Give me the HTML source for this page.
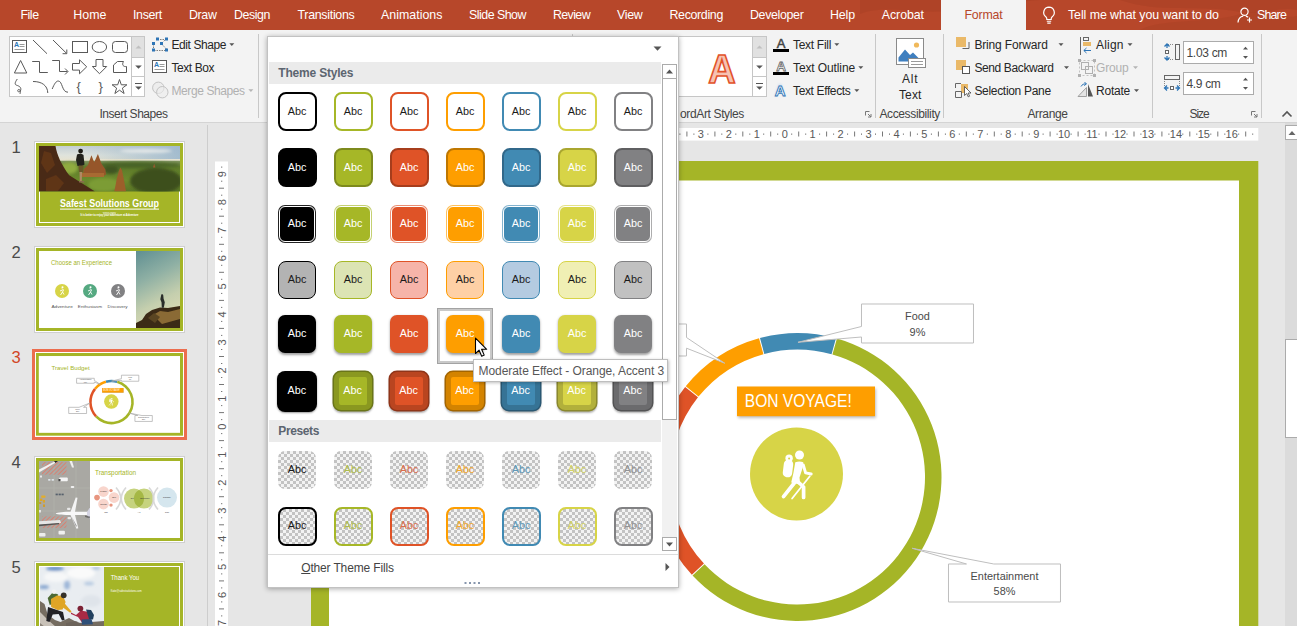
<!DOCTYPE html>
<html lang="en"><head><meta charset="utf-8"><title>PowerPoint</title>
<style>

html,body{margin:0;padding:0;}
body{width:1297px;height:626px;overflow:hidden;background:#e6e6e6;font-family:"Liberation Sans",sans-serif;}
#app{position:relative;width:1297px;height:626px;overflow:hidden;background:#e6e6e6;}
.t{position:absolute;white-space:nowrap;display:block;}
.a{position:absolute;display:block;}
svg{position:absolute;overflow:visible;}
.sep{position:absolute;width:1px;background:#c8c8c8;top:34px;height:84px;}
.it{box-sizing:border-box;display:flex;align-items:center;justify-content:center;font-size:10.8px;}
.it span{display:block;line-height:12px;position:relative;top:-0.800px;}

</style></head>
<body>
<div id="app">
<div class="a" id="tabs" style="left:0;top:0;width:1297px;height:30px;background:#b7472a;"></div>
<svg style="left:860px;top:0" width="437" height="30" viewBox="0 0 437 30"><path d="M0 14 C30 2 70 20 110 6 L180 0 L260 0 C300 14 340 4 380 12 C400 16 420 6 437 10 L437 0 L0 0Z" fill="#a94024" opacity="0.55"/><path d="M280 30 C300 18 350 24 380 14 C400 8 420 20 437 16 L437 30Z" fill="#a94024" opacity="0.45"/></svg>
<div class="a" style="left:941px;top:0;width:85px;height:30px;background:#f3f3f3;"></div>
<span class="t" style="left:20.4px;top:7.0px;height:16px;line-height:16px;font-size:12.4px;color:#ffffff;letter-spacing:-0.445px;">File</span>
<span class="t" style="left:73.3px;top:7.0px;height:16px;line-height:16px;font-size:12.4px;color:#ffffff;letter-spacing:0.031px;">Home</span>
<span class="t" style="left:133.0px;top:7.0px;height:16px;line-height:16px;font-size:12.4px;color:#ffffff;letter-spacing:-0.335px;">Insert</span>
<span class="t" style="left:189.0px;top:7.0px;height:16px;line-height:16px;font-size:12.4px;color:#ffffff;letter-spacing:-0.359px;">Draw</span>
<span class="t" style="left:234.0px;top:7.0px;height:16px;line-height:16px;font-size:12.4px;color:#ffffff;letter-spacing:-0.433px;">Design</span>
<span class="t" style="left:297.5px;top:7.0px;height:16px;line-height:16px;font-size:12.4px;color:#ffffff;letter-spacing:-0.290px;">Transitions</span>
<span class="t" style="left:381.0px;top:7.0px;height:16px;line-height:16px;font-size:12.4px;color:#ffffff;letter-spacing:0.016px;">Animations</span>
<span class="t" style="left:469.0px;top:7.0px;height:16px;line-height:16px;font-size:12.4px;color:#ffffff;letter-spacing:-0.504px;">Slide Show</span>
<span class="t" style="left:553.0px;top:7.0px;height:16px;line-height:16px;font-size:12.4px;color:#ffffff;letter-spacing:-0.610px;">Review</span>
<span class="t" style="left:617.0px;top:7.0px;height:16px;line-height:16px;font-size:12.4px;color:#ffffff;letter-spacing:-0.289px;">View</span>
<span class="t" style="left:669.5px;top:7.0px;height:16px;line-height:16px;font-size:12.4px;color:#ffffff;letter-spacing:-0.336px;">Recording</span>
<span class="t" style="left:750.0px;top:7.0px;height:16px;line-height:16px;font-size:12.4px;color:#ffffff;letter-spacing:-0.336px;">Developer</span>
<span class="t" style="left:830.0px;top:7.0px;height:16px;line-height:16px;font-size:12.4px;color:#ffffff;letter-spacing:-0.126px;">Help</span>
<span class="t" style="left:881.8px;top:7.0px;height:16px;line-height:16px;font-size:12.4px;color:#ffffff;letter-spacing:-0.076px;">Acrobat</span>
<span class="t" style="left:964.5px;top:7.0px;height:16px;line-height:16px;font-size:12.4px;color:#b7472a;letter-spacing:-0.212px;">Format</span>
<span class="t" style="left:1068.0px;top:7.0px;height:16px;line-height:16px;font-size:12.4px;color:#ffffff;letter-spacing:-0.075px;">Tell me what you want to do</span>
<span class="t" style="left:1257.0px;top:7.0px;height:16px;line-height:16px;font-size:12.4px;color:#ffffff;letter-spacing:-0.818px;">Share</span>
<svg style="left:1041px;top:6px" width="16" height="19" viewBox="0 0 16 19"><path d="M8 1.2a5.3 5.3 0 0 0-3.2 9.5c.7.6 1 1.300 1 2.100v.7h4.400v-.7c0-.8.3-1.500 1-2.100A5.300 5.300 0 0 0 8 1.200Z" fill="none" stroke="#fff" stroke-width="1.200"/><path d="M5.800 15.300h4.400M6.300 17.100h3.400" stroke="#fff" stroke-width="1.100"/></svg>
<svg style="left:1237px;top:7px" width="17" height="17" viewBox="0 0 17 17"><circle cx="7.500" cy="4.800" r="3.600" fill="none" stroke="#fff" stroke-width="1.200"/><path d="M1 15.500c.3-3.600 2.600-6 5.200-6.400M8.800 9.100c.8.200 1.600.5 2.300 1.100" fill="none" stroke="#fff" stroke-width="1.200"/><path d="M12.500 10.500v5M10 13h5" stroke="#fff" stroke-width="1.200"/></svg>
<div class="a" style="left:0;top:30px;width:1297px;height:92px;background:#f3f3f3;border-bottom:1px solid #d4d4d4;"></div>
<div class="sep" style="left:258px"></div>
<div class="sep" style="left:572px"></div>
<div class="sep" style="left:875px"></div>
<div class="sep" style="left:943px"></div>
<div class="sep" style="left:1152px"></div>
<div class="sep" style="left:1261px"></div>
<div class="a" style="left:9px;top:36px;width:136px;height:61px;background:#fff;border:1px solid #c6c6c6;box-sizing:border-box;"></div>
<div class="a" style="left:131px;top:36px;width:14px;height:61px;border:1px solid #c6c6c6;box-sizing:border-box;background:#fff"></div>
<div class="a" style="left:132px;top:37px;width:12px;height:20px;background:#e1e1e1;border-bottom:1px solid #c6c6c6;"></div>
<div class="a" style="left:132px;top:76px;width:12px;height:1px;background:#c6c6c6;"></div>
<svg style="left:0;top:0" width="1297" height="130" viewBox="0 0 1297 130" fill="none" stroke="#595959" stroke-width="1"><path d="M135.500 48.500l3-3 3 3z" fill="#c0c0c0" stroke="none"/><path d="M135.200 65.500h6.600l-3.300 3.300z" fill="#555" stroke="none"/><path d="M135 83.500h7" stroke="#555"/><path d="M135.200 86.500h6.600l-3.300 3.300z" fill="#555" stroke="none"/><rect x="12.500" y="40.500" width="14" height="12" fill="#fff"/><path d="M19.500 44.500h5M19.500 46.500h5M14.500 49.500h10" stroke="#9a9a9a"/><text x="14" y="47" font-family="Liberation Sans, sans-serif" font-size="7" font-weight="bold" fill="#2e75b6" stroke="none">A</text><path d="M33 40l14 13.700"/><path d="M53 40l13.500 13.300M66.800 49.500v4.200h-4.200"/><rect x="72.500" y="41.500" width="15" height="11"/><ellipse cx="99.400" cy="47" rx="7.200" ry="5.500"/><rect x="112.500" y="41.500" width="15" height="11" rx="3"/><path d="M20.600 60.500l6.200 12.500h-12.400z"/><path d="M32.200 61.500h7.300v11h8.300"/><path d="M52.200 60.500h7.300v11h8M65 68.500l3 3-3 3"/><path d="M72.500 63.500h7v-3.700l7.200 7-7.200 7v-3.700h-7z"/><path d="M96 59.500h7v7h3.700l-7.200 7.200-7.200-7.200h3.700z"/><path d="M113.500 72.500v-7.500l4-3.500h6c-2 3.500 0 5.500 3 5v6z"/><path d="M17.300 79c-2.500 3.500-2.800 5.500-.8 6.200 2.500.8 5 2 4.200 5-.6 2-3 2.200-3 .4 0-1.500 2.200-1.600 2.600.3.200 1.200-.1 2-.3 3"/><path d="M33 81.500c9 0 14.500 4 14.800 11.500"/><path d="M52.200 89c2-5 4-8 6-8 4.500 0 3.500 11.500 9.800 11.200"/><text x="76.500" y="91" font-family="Liberation Sans, sans-serif" font-size="13" fill="#595959" stroke="none">{</text><text x="98.500" y="91" font-family="Liberation Sans, sans-serif" font-size="13" fill="#595959" stroke="none">}</text><path d="M119.500 79.500l1.800 5.300h5.600l-4.500 3.300 1.700 5.400-4.600-3.300-4.600 3.300 1.700-5.400-4.500-3.300h5.600z"/><path d="M157.500 39.500h9M153.500 44v5M154 50.500h12M162 44.500l4.500 4.500M162 43l4-4" stroke="#7f7f7f" stroke-dasharray="1.500 1"/><rect x="156" y="37.5" width="3" height="3" fill="#2e75b6" stroke="none"/><rect x="165" y="37.5" width="3" height="3" fill="#2e75b6" stroke="none"/><rect x="152" y="42" width="3" height="3" fill="#2e75b6" stroke="none"/><rect x="160" y="42" width="3" height="3" fill="#2e75b6" stroke="none"/><rect x="152" y="48.5" width="3" height="3" fill="#2e75b6" stroke="none"/><rect x="165" y="48.5" width="3" height="3" fill="#2e75b6" stroke="none"/><rect x="152.500" y="60.500" width="14" height="12" fill="#fff"/><path d="M159.500 64.500h5M159.500 66.500h5M154.500 69.500h10" stroke="#9a9a9a"/><text x="154" y="67" font-family="Liberation Sans, sans-serif" font-size="7" font-weight="bold" fill="#2e75b6" stroke="none">A</text><circle cx="158.300" cy="87.800" r="5.700" stroke="#c3c3c3" fill="#ededed"/><circle cx="162.300" cy="92.200" r="5.700" stroke="#c3c3c3" fill="#ededed" fill-opacity=".6"/><path d="M229.3 43.3h5l-2.500 2.700z" fill="#555" stroke="none"/><path d="M248.4 89.3h5l-2.500 2.700z" fill="#b5b5b5" stroke="none"/><rect x="676.500" y="36.500" width="90" height="60" fill="#fff" stroke="#c6c6c6"/><rect x="752.500" y="36.500" width="14" height="60" fill="#fff" stroke="#c6c6c6"/><rect x="753" y="37" width="13" height="20" fill="#e1e1e1" stroke="none"/><path d="M752.500 57.500h14M752.500 76.500h14" stroke="#c6c6c6"/><path d="M756.500 48.500l3-3 3 3z" fill="#c0c0c0" stroke="none"/><path d="M756.200 65.500h6.600l-3.300 3.300z" fill="#555" stroke="none"/><path d="M756 83.500h7" stroke="#555"/><path d="M756.200 86.500h6.600l-3.300 3.300z" fill="#555" stroke="none"/><text x="708.300" y="83" font-family="Liberation Sans, sans-serif" font-size="41" font-weight="bold" fill="#f6c2b2" stroke="#e2522a" stroke-width="1.700" textLength="27.400" lengthAdjust="spacingAndGlyphs">A</text><text x="776.700" y="47.800" font-family="Liberation Sans, sans-serif" font-size="13" fill="#444" stroke="#444" stroke-width=".5">A</text><rect x="773" y="49" width="16" height="3" fill="#000" stroke="none"/><text x="776.300" y="70.800" font-family="Liberation Sans, sans-serif" font-size="13.500" font-weight="bold" fill="#fff" stroke="#666" stroke-width=".8">A</text><rect x="773" y="72" width="16" height="3" fill="#000" stroke="none"/><text x="774.300" y="96" font-family="Liberation Sans, sans-serif" font-size="16" font-weight="bold" fill="#cfe0f3" stroke="none" filter="url(#b1)">A</text><text x="774.800" y="95.600" font-family="Liberation Sans, sans-serif" font-size="15" font-weight="bold" fill="#fff" stroke="#2e75b6" stroke-width=".9">A</text><path d="M834.3 43.3h5l-2.500 2.700z" fill="#555" stroke="none"/><path d="M858.3 66.3h5l-2.500 2.700z" fill="#555" stroke="none"/><path d="M854.3 89.3h5l-2.500 2.700z" fill="#555" stroke="none"/><path d="M865.5 115.5v-4h4" stroke="#777"/><path d="M868.0 114.0l3 3M871.0 114.0v3h-3" stroke="#777"/><path d="M1251.5 115.5v-4h4" stroke="#777"/><path d="M1254.0 114.0l3 3M1257.0 114.0v3h-3" stroke="#777"/><rect x="896.500" y="38.500" width="27" height="26" fill="#fff" stroke="#8a8a8a"/><path d="M898.500 61.500v-4l6.500-8 5 5.500 3-2.500 5.500 5.500v3.500z" fill="#3f7fbf" stroke="none"/><circle cx="916.500" cy="45" r="2.600" fill="#f0b95b" stroke="none"/><rect x="908.500" y="58.500" width="17" height="9" fill="#fff" stroke="#8a8a8a"/><path d="M911 61.500h12M911 64.500h12" stroke="#9a9a9a"/><rect x="956" y="37" width="10" height="10" fill="#eab968" stroke="none"/><path d="M962.500 48.500h6.500v-6.500" stroke="#666"/><rect x="956" y="60" width="10" height="10" fill="#eab968" stroke="none"/><rect x="962.500" y="66.500" width="7" height="7" fill="#fff" stroke="#555"/><rect x="961" y="84" width="7" height="9" fill="#eab968" stroke="none"/><path d="M955.500 88v-4.500h5.500M955.500 91.500h6v6h-6z" stroke="#666"/><path d="M964.500 86.500v9l2.200-2 1.500 3.300 1.400-.6-1.500-3.200h2.900z" fill="#fff" stroke="#444" stroke-width=".8"/><path d="M1058.5 43.3h5l-2.500 2.700z" fill="#555" stroke="none"/><path d="M1064.0 66.3h5l-2.500 2.700z" fill="#555" stroke="none"/><path d="M1080.500 37v18" stroke="#666"/><rect x="1083.500" y="37.500" width="5" height="3" stroke="#666"/><rect x="1083" y="42" width="8" height="4" fill="#eab968" stroke="none"/><path d="M1091 50.500h-7M1086.500 48l-2.700 2.500 2.700 2.500" stroke="#2e75b6"/><path d="M1127.5 43.3h5l-2.500 2.700z" fill="#555" stroke="none"/><rect x="1081.500" y="62.500" width="7" height="7" stroke="#b0b0b0"/><rect x="1085.500" y="66.500" width="7" height="7" stroke="#b0b0b0"/><path d="M1079.500 60.500h15v15h-15z" stroke="#c3c3c3" stroke-dasharray="2 2"/><rect x="1078" y="59" width="3" height="3" fill="#b0b0b0" stroke="none"/><rect x="1093" y="59" width="3" height="3" fill="#b0b0b0" stroke="none"/><rect x="1078" y="74" width="3" height="3" fill="#b0b0b0" stroke="none"/><rect x="1093" y="74" width="3" height="3" fill="#b0b0b0" stroke="none"/><path d="M1133.0 66.3h5l-2.500 2.700z" fill="#b5b5b5" stroke="none"/><path d="M1086.500 96.500h-8.500l8.500-9z" stroke="#a0a0a0" fill="#e4e4e4"/><path d="M1088 96.500v-12.500l5 12.500z" fill="#555" stroke="none"/><path d="M1081 86.500c1-2 3-3 5-2.500M1084.500 82l2 2-2.500 1.500" stroke="#2e75b6"/><path d="M1134.0 89.3h5l-2.500 2.700z" fill="#555" stroke="none"/><rect x="1175.500" y="44.500" width="4" height="15" stroke="#666"/><path d="M1168 44.500h6M1168 59.500h6" stroke="#888" stroke-dasharray="1 1"/><rect x="1165.500" y="50.500" width="3" height="3" stroke="#666" fill="#fff"/><path d="M1167 44v4M1164.500 46.500l2.500-2.500 2.500 2.500M1167 60v-4M1164.500 57.500l2.500 2.500 2.500-2.500" stroke="#2e75b6" stroke-width="1.300"/><rect x="1164.500" y="75.500" width="15" height="4" stroke="#666"/><path d="M1164.500 81v6M1179.500 81v6" stroke="#888" stroke-dasharray="1 1"/><rect x="1170.500" y="86.500" width="3" height="3" stroke="#666" fill="#fff"/><path d="M1164.500 88h4M1167 85.500l-2.500 2.500 2.500 2.500M1179.500 88h-4M1177 85.500l2.500 2.500-2.500 2.500" stroke="#2e75b6" stroke-width="1.300"/><rect x="1183.500" y="41.500" width="70" height="22" fill="#fff" stroke="#ababab"/><rect x="1183.500" y="72.500" width="70" height="22" fill="#fff" stroke="#ababab"/><path d="M1243 49.5l2.500-2.800 2.500 2.800z" fill="#555" stroke="none"/><path d="M1243 56.0h5l-2.500 2.800z" fill="#555" stroke="none"/><path d="M1243 80.5l2.500-2.800 2.500 2.800z" fill="#555" stroke="none"/><path d="M1243 87.0h5l-2.500 2.800z" fill="#555" stroke="none"/><path d="M1282.500 116.500l4.500-4.500 4.500 4.500" stroke="#555" stroke-width="1.600"/></svg>
<span class="t" style="left:171.5px;top:36.8px;height:16px;line-height:16px;font-size:12px;color:#262626;letter-spacing:-0.421px;">Edit Shape</span>
<span class="t" style="left:171.5px;top:59.6px;height:16px;line-height:16px;font-size:12px;color:#262626;letter-spacing:-0.440px;">Text Box</span>
<span class="t" style="left:171.5px;top:82.6px;height:16px;line-height:16px;font-size:12px;color:#b1b1b1;letter-spacing:-0.404px;">Merge Shapes</span>
<span class="t" style="left:99.5px;top:106.0px;height:16px;line-height:16px;font-size:12px;color:#444;letter-spacing:-0.465px;">Insert Shapes</span>
<span class="t" style="left:793.0px;top:36.8px;height:16px;line-height:16px;font-size:12px;color:#262626;letter-spacing:-0.297px;">Text Fill</span>
<span class="t" style="left:793.0px;top:59.6px;height:16px;line-height:16px;font-size:12px;color:#262626;letter-spacing:-0.114px;">Text Outline</span>
<span class="t" style="left:793.0px;top:82.6px;height:16px;line-height:16px;font-size:12px;color:#262626;letter-spacing:-0.367px;">Text Effects</span>
<span class="t" style="left:680.0px;top:106.0px;height:16px;line-height:16px;font-size:12px;color:#444;letter-spacing:-0.361px;">ordArt Styles</span>
<span class="t" style="left:902.0px;top:71.0px;height:16px;line-height:16px;font-size:12px;color:#262626;letter-spacing:0.832px;">Alt</span>
<span class="t" style="left:899.0px;top:86.6px;height:16px;line-height:16px;font-size:12px;color:#262626;letter-spacing:0.123px;">Text</span>
<span class="t" style="left:879.4px;top:106.0px;height:16px;line-height:16px;font-size:12px;color:#444;letter-spacing:-0.365px;">Accessibility</span>
<span class="t" style="left:974.4px;top:36.8px;height:16px;line-height:16px;font-size:12px;color:#262626;letter-spacing:-0.159px;">Bring Forward</span>
<span class="t" style="left:974.4px;top:59.6px;height:16px;line-height:16px;font-size:12px;color:#262626;letter-spacing:-0.381px;">Send Backward</span>
<span class="t" style="left:974.4px;top:82.6px;height:16px;line-height:16px;font-size:12px;color:#262626;letter-spacing:-0.309px;">Selection Pane</span>
<span class="t" style="left:1096.0px;top:36.8px;height:16px;line-height:16px;font-size:12px;color:#262626;letter-spacing:0.203px;">Align</span>
<span class="t" style="left:1096.0px;top:59.6px;height:16px;line-height:16px;font-size:12px;color:#b1b1b1;letter-spacing:-0.170px;">Group</span>
<span class="t" style="left:1096.0px;top:82.6px;height:16px;line-height:16px;font-size:12px;color:#262626;letter-spacing:-0.226px;">Rotate</span>
<span class="t" style="left:1027.5px;top:106.0px;height:16px;line-height:16px;font-size:12px;color:#444;letter-spacing:-0.385px;">Arrange</span>
<span class="t" style="left:1186.5px;top:44.7px;height:16px;line-height:16px;font-size:12px;color:#444;letter-spacing:-0.312px;">1.03 cm</span>
<span class="t" style="left:1186.5px;top:75.7px;height:16px;line-height:16px;font-size:12px;color:#444;letter-spacing:-0.335px;">4.9 cm</span>
<span class="t" style="left:1189.5px;top:106.0px;height:16px;line-height:16px;font-size:12px;color:#444;letter-spacing:-1.036px;">Size</span>
<div class="a" style="left:207px;top:125px;width:1px;height:501px;background:#cdcdcd;"></div>
<svg width="0" height="0" style="left:0;top:0"><defs><filter id="bl" x="-20%" y="-40%" width="140%" height="180%"><feGaussianBlur stdDeviation="1.600"/></filter><filter id="b0"><feGaussianBlur stdDeviation="0.400"/></filter><filter id="b1"><feGaussianBlur stdDeviation="0.800"/></filter><filter id="b2"><feGaussianBlur stdDeviation="1.500"/></filter><filter id="b3"><feGaussianBlur stdDeviation="3"/></filter></defs></svg>
<svg style="left:311px;top:160.5px" width="947.3" height="532.9" viewBox="311 160.500 947.300 532.900" preserveAspectRatio="none" font-family="Liberation Sans, sans-serif"><rect x="311" y="160.500" width="947.300" height="532.900" fill="#a5b527"/><rect x="329" y="180" width="910" height="495" fill="#fff"/><text x="411" y="270" font-size="40" fill="#a5b527" textLength="246" lengthAdjust="spacingAndGlyphs">Travel Budget</text><path d="M759.99 337.47A144.00 144.00 0 0 1 835.98 337.74L831.57 353.64A127.50 127.50 0 0 0 764.29 353.40Z" fill="#418ab3"/><path d="M836.95 338.01A144.00 144.00 0 1 1 692.53 575.07L704.56 563.78A127.50 127.50 0 1 0 832.43 353.88Z" fill="#a5b527"/><path d="M691.84 574.34A144.00 144.00 0 0 1 685.12 386.47L698.00 396.78A127.50 127.50 0 0 0 703.95 563.13Z" fill="#df5327"/><path d="M685.75 385.68A144.00 144.00 0 0 1 759.02 337.74L763.43 353.64A127.50 127.50 0 0 0 698.55 396.09Z" fill="#fe9e00"/><path d="M861.500 303.500h112v39h-112v-6l-63.500 5.300 63.500-15.800z" fill="#fff" stroke="#bfbfbf" stroke-width="1"/><text x="917.5" y="319.7" font-size="11.800" fill="#4a4a4a" text-anchor="middle" textLength="24.8" lengthAdjust="spacingAndGlyphs">Food</text><text x="917.5" y="335.3" font-size="11.800" fill="#4a4a4a" text-anchor="middle" textLength="15.8" lengthAdjust="spacingAndGlyphs">9%</text><path d="M948.500 563.500h18l-54.300-15.700 81.600 15.700h66.700v38h-112z" fill="#fff" stroke="#bfbfbf" stroke-width="1"/><text x="1004.5" y="579.2" font-size="11.800" fill="#4a4a4a" text-anchor="middle" textLength="67.9" lengthAdjust="spacingAndGlyphs">Entertainment</text><text x="1004.5" y="594.8" font-size="11.800" fill="#4a4a4a" text-anchor="middle" textLength="21.8" lengthAdjust="spacingAndGlyphs">58%</text><path d="M572.500 323.500h114v13.500l38.200 25.700-38.200-15v7.800h-114z" fill="#fff" stroke="#bfbfbf" stroke-width="1"/><text x="629.5" y="336.2" font-size="11.800" fill="#4a4a4a" text-anchor="middle" textLength="78.2" lengthAdjust="spacingAndGlyphs">Accommodation</text><text x="629.5" y="351.8" font-size="11.800" fill="#4a4a4a" text-anchor="middle" textLength="21.8" lengthAdjust="spacingAndGlyphs">10%</text><path d="M521.500 510.500h67l70.500-28-41.500 28h19.500v40h-115z" fill="#fff" stroke="#bfbfbf" stroke-width="1"/><text x="579.0" y="527.2" font-size="11.800" fill="#4a4a4a" text-anchor="middle" textLength="29.9" lengthAdjust="spacingAndGlyphs">Travel</text><text x="579.0" y="542.8" font-size="11.800" fill="#4a4a4a" text-anchor="middle" textLength="21.8" lengthAdjust="spacingAndGlyphs">23%</text><rect x="738" y="388" width="138" height="29.500" fill="#000" opacity=".25" filter="url(#bl)"/><rect x="737" y="386" width="138" height="29.700" fill="#fe9e00"/><text x="744.800" y="407" font-size="17.500" fill="#fff" textLength="107" lengthAdjust="spacingAndGlyphs">BON VOYAGE!</text><circle cx="796.500" cy="473.500" r="46.500" fill="#d7d447"/><g fill="#fff" stroke="none"><circle cx="799.500" cy="454.500" r="4.500"/><rect x="783.300" y="459.400" width="9.400" height="17.400" rx="4.200" transform="rotate(7 788 468)"/><circle cx="789.100" cy="457.800" r="3.700"/><circle cx="789.100" cy="458" r="1" fill="#d7d447"/><path d="M795.300 461.800q4.200-1.700 8 0l-.6 5.500-3.200 9.700.8 7.300-9.100-2.300 2.200-9.500z"/></g><g stroke="#fff" fill="none" stroke-linecap="round" stroke-linejoin="round"><path d="M803.300 464.500l2.300 7.800 5.600 1.200" stroke-width="2.900"/><path d="M794.300 482.500l-10.800 13.600" stroke-width="3.700"/><path d="M799.300 482.500l4.300 4v10.500" stroke-width="3.700"/><path d="M809.800 475.800l-17.700 22.200" stroke-width="1.800"/></g></svg>
<svg style="left:0;top:0" width="1297" height="626" viewBox="0 0 1297 626"><rect x="311" y="128" width="947.300" height="12.600" fill="#fff"/><text x="337.7" y="138.400" text-anchor="middle" font-family="Liberation Sans, sans-serif" font-size="11" fill="#595959">16</text><rect x="344.1" y="133.500" width="1" height="1.300" fill="#777"/><rect x="351.1" y="131.500" width="1" height="5" fill="#777"/><rect x="358.1" y="133.500" width="1" height="1.300" fill="#777"/><text x="365.6" y="138.400" text-anchor="middle" font-family="Liberation Sans, sans-serif" font-size="11" fill="#595959">15</text><rect x="372.1" y="133.500" width="1" height="1.300" fill="#777"/><rect x="379.1" y="131.500" width="1" height="5" fill="#777"/><rect x="386.1" y="133.500" width="1" height="1.300" fill="#777"/><text x="393.5" y="138.400" text-anchor="middle" font-family="Liberation Sans, sans-serif" font-size="11" fill="#595959">14</text><rect x="400.0" y="133.500" width="1" height="1.300" fill="#777"/><rect x="407.0" y="131.500" width="1" height="5" fill="#777"/><rect x="414.0" y="133.500" width="1" height="1.300" fill="#777"/><text x="421.5" y="138.400" text-anchor="middle" font-family="Liberation Sans, sans-serif" font-size="11" fill="#595959">13</text><rect x="428.0" y="133.500" width="1" height="1.300" fill="#777"/><rect x="435.0" y="131.500" width="1" height="5" fill="#777"/><rect x="441.9" y="133.500" width="1" height="1.300" fill="#777"/><text x="449.4" y="138.400" text-anchor="middle" font-family="Liberation Sans, sans-serif" font-size="11" fill="#595959">12</text><rect x="455.9" y="133.500" width="1" height="1.300" fill="#777"/><rect x="462.9" y="131.500" width="1" height="5" fill="#777"/><rect x="469.9" y="133.500" width="1" height="1.300" fill="#777"/><text x="477.4" y="138.400" text-anchor="middle" font-family="Liberation Sans, sans-serif" font-size="11" fill="#595959">11</text><rect x="483.8" y="133.500" width="1" height="1.300" fill="#777"/><rect x="490.8" y="131.500" width="1" height="5" fill="#777"/><rect x="497.8" y="133.500" width="1" height="1.300" fill="#777"/><text x="505.3" y="138.400" text-anchor="middle" font-family="Liberation Sans, sans-serif" font-size="11" fill="#595959">10</text><rect x="511.8" y="133.500" width="1" height="1.300" fill="#777"/><rect x="518.8" y="131.500" width="1" height="5" fill="#777"/><rect x="525.8" y="133.500" width="1" height="1.300" fill="#777"/><text x="533.2" y="138.400" text-anchor="middle" font-family="Liberation Sans, sans-serif" font-size="11" fill="#595959">9</text><rect x="539.7" y="133.500" width="1" height="1.300" fill="#777"/><rect x="546.7" y="131.500" width="1" height="5" fill="#777"/><rect x="553.7" y="133.500" width="1" height="1.300" fill="#777"/><text x="561.2" y="138.400" text-anchor="middle" font-family="Liberation Sans, sans-serif" font-size="11" fill="#595959">8</text><rect x="567.7" y="133.500" width="1" height="1.300" fill="#777"/><rect x="574.7" y="131.500" width="1" height="5" fill="#777"/><rect x="581.6" y="133.500" width="1" height="1.300" fill="#777"/><text x="589.1" y="138.400" text-anchor="middle" font-family="Liberation Sans, sans-serif" font-size="11" fill="#595959">7</text><rect x="595.6" y="133.500" width="1" height="1.300" fill="#777"/><rect x="602.6" y="131.500" width="1" height="5" fill="#777"/><rect x="609.6" y="133.500" width="1" height="1.300" fill="#777"/><text x="617.1" y="138.400" text-anchor="middle" font-family="Liberation Sans, sans-serif" font-size="11" fill="#595959">6</text><rect x="623.5" y="133.500" width="1" height="1.300" fill="#777"/><rect x="630.5" y="131.500" width="1" height="5" fill="#777"/><rect x="637.5" y="133.500" width="1" height="1.300" fill="#777"/><text x="645.0" y="138.400" text-anchor="middle" font-family="Liberation Sans, sans-serif" font-size="11" fill="#595959">5</text><rect x="651.5" y="133.500" width="1" height="1.300" fill="#777"/><rect x="658.5" y="131.500" width="1" height="5" fill="#777"/><rect x="665.5" y="133.500" width="1" height="1.300" fill="#777"/><text x="672.9" y="138.400" text-anchor="middle" font-family="Liberation Sans, sans-serif" font-size="11" fill="#595959">4</text><rect x="679.4" y="133.500" width="1" height="1.300" fill="#777"/><rect x="686.4" y="131.500" width="1" height="5" fill="#777"/><rect x="693.4" y="133.500" width="1" height="1.300" fill="#777"/><text x="700.9" y="138.400" text-anchor="middle" font-family="Liberation Sans, sans-serif" font-size="11" fill="#595959">3</text><rect x="707.4" y="133.500" width="1" height="1.300" fill="#777"/><rect x="714.4" y="131.500" width="1" height="5" fill="#777"/><rect x="721.3" y="133.500" width="1" height="1.300" fill="#777"/><text x="728.8" y="138.400" text-anchor="middle" font-family="Liberation Sans, sans-serif" font-size="11" fill="#595959">2</text><rect x="735.3" y="133.500" width="1" height="1.300" fill="#777"/><rect x="742.3" y="131.500" width="1" height="5" fill="#777"/><rect x="749.3" y="133.500" width="1" height="1.300" fill="#777"/><text x="756.8" y="138.400" text-anchor="middle" font-family="Liberation Sans, sans-serif" font-size="11" fill="#595959">1</text><rect x="763.2" y="133.500" width="1" height="1.300" fill="#777"/><rect x="770.2" y="131.500" width="1" height="5" fill="#777"/><rect x="777.2" y="133.500" width="1" height="1.300" fill="#777"/><text x="784.7" y="138.400" text-anchor="middle" font-family="Liberation Sans, sans-serif" font-size="11" fill="#595959">0</text><rect x="791.2" y="133.500" width="1" height="1.300" fill="#777"/><rect x="798.2" y="131.500" width="1" height="5" fill="#777"/><rect x="805.2" y="133.500" width="1" height="1.300" fill="#777"/><text x="812.6" y="138.400" text-anchor="middle" font-family="Liberation Sans, sans-serif" font-size="11" fill="#595959">1</text><rect x="819.1" y="133.500" width="1" height="1.300" fill="#777"/><rect x="826.1" y="131.500" width="1" height="5" fill="#777"/><rect x="833.1" y="133.500" width="1" height="1.300" fill="#777"/><text x="840.6" y="138.400" text-anchor="middle" font-family="Liberation Sans, sans-serif" font-size="11" fill="#595959">2</text><rect x="847.1" y="133.500" width="1" height="1.300" fill="#777"/><rect x="854.1" y="131.500" width="1" height="5" fill="#777"/><rect x="861.0" y="133.500" width="1" height="1.300" fill="#777"/><text x="868.5" y="138.400" text-anchor="middle" font-family="Liberation Sans, sans-serif" font-size="11" fill="#595959">3</text><rect x="875.0" y="133.500" width="1" height="1.300" fill="#777"/><rect x="882.0" y="131.500" width="1" height="5" fill="#777"/><rect x="889.0" y="133.500" width="1" height="1.300" fill="#777"/><text x="896.5" y="138.400" text-anchor="middle" font-family="Liberation Sans, sans-serif" font-size="11" fill="#595959">4</text><rect x="902.9" y="133.500" width="1" height="1.300" fill="#777"/><rect x="909.9" y="131.500" width="1" height="5" fill="#777"/><rect x="916.9" y="133.500" width="1" height="1.300" fill="#777"/><text x="924.4" y="138.400" text-anchor="middle" font-family="Liberation Sans, sans-serif" font-size="11" fill="#595959">5</text><rect x="930.9" y="133.500" width="1" height="1.300" fill="#777"/><rect x="937.9" y="131.500" width="1" height="5" fill="#777"/><rect x="944.9" y="133.500" width="1" height="1.300" fill="#777"/><text x="952.3" y="138.400" text-anchor="middle" font-family="Liberation Sans, sans-serif" font-size="11" fill="#595959">6</text><rect x="958.8" y="133.500" width="1" height="1.300" fill="#777"/><rect x="965.8" y="131.500" width="1" height="5" fill="#777"/><rect x="972.8" y="133.500" width="1" height="1.300" fill="#777"/><text x="980.3" y="138.400" text-anchor="middle" font-family="Liberation Sans, sans-serif" font-size="11" fill="#595959">7</text><rect x="986.8" y="133.500" width="1" height="1.300" fill="#777"/><rect x="993.8" y="131.500" width="1" height="5" fill="#777"/><rect x="1000.7" y="133.500" width="1" height="1.300" fill="#777"/><text x="1008.2" y="138.400" text-anchor="middle" font-family="Liberation Sans, sans-serif" font-size="11" fill="#595959">8</text><rect x="1014.7" y="133.500" width="1" height="1.300" fill="#777"/><rect x="1021.7" y="131.500" width="1" height="5" fill="#777"/><rect x="1028.7" y="133.500" width="1" height="1.300" fill="#777"/><text x="1036.2" y="138.400" text-anchor="middle" font-family="Liberation Sans, sans-serif" font-size="11" fill="#595959">9</text><rect x="1042.6" y="133.500" width="1" height="1.300" fill="#777"/><rect x="1049.6" y="131.500" width="1" height="5" fill="#777"/><rect x="1056.6" y="133.500" width="1" height="1.300" fill="#777"/><text x="1064.1" y="138.400" text-anchor="middle" font-family="Liberation Sans, sans-serif" font-size="11" fill="#595959">10</text><rect x="1070.6" y="133.500" width="1" height="1.300" fill="#777"/><rect x="1077.6" y="131.500" width="1" height="5" fill="#777"/><rect x="1084.6" y="133.500" width="1" height="1.300" fill="#777"/><text x="1092.0" y="138.400" text-anchor="middle" font-family="Liberation Sans, sans-serif" font-size="11" fill="#595959">11</text><rect x="1098.5" y="133.500" width="1" height="1.300" fill="#777"/><rect x="1105.5" y="131.500" width="1" height="5" fill="#777"/><rect x="1112.5" y="133.500" width="1" height="1.300" fill="#777"/><text x="1120.0" y="138.400" text-anchor="middle" font-family="Liberation Sans, sans-serif" font-size="11" fill="#595959">12</text><rect x="1126.5" y="133.500" width="1" height="1.300" fill="#777"/><rect x="1133.5" y="131.500" width="1" height="5" fill="#777"/><rect x="1140.4" y="133.500" width="1" height="1.300" fill="#777"/><text x="1147.9" y="138.400" text-anchor="middle" font-family="Liberation Sans, sans-serif" font-size="11" fill="#595959">13</text><rect x="1154.4" y="133.500" width="1" height="1.300" fill="#777"/><rect x="1161.4" y="131.500" width="1" height="5" fill="#777"/><rect x="1168.4" y="133.500" width="1" height="1.300" fill="#777"/><text x="1175.9" y="138.400" text-anchor="middle" font-family="Liberation Sans, sans-serif" font-size="11" fill="#595959">14</text><rect x="1182.3" y="133.500" width="1" height="1.300" fill="#777"/><rect x="1189.3" y="131.500" width="1" height="5" fill="#777"/><rect x="1196.3" y="133.500" width="1" height="1.300" fill="#777"/><text x="1203.8" y="138.400" text-anchor="middle" font-family="Liberation Sans, sans-serif" font-size="11" fill="#595959">15</text><rect x="1210.3" y="133.500" width="1" height="1.300" fill="#777"/><rect x="1217.3" y="131.500" width="1" height="5" fill="#777"/><rect x="1224.3" y="133.500" width="1" height="1.300" fill="#777"/><text x="1231.7" y="138.400" text-anchor="middle" font-family="Liberation Sans, sans-serif" font-size="11" fill="#595959">16</text><rect x="1238.2" y="133.500" width="1" height="1.300" fill="#777"/><rect x="1245.2" y="131.500" width="1" height="5" fill="#777"/><rect x="1252.2" y="133.500" width="1" height="1.300" fill="#777"/><rect x="215" y="161.500" width="13" height="470" fill="#fff"/><text transform="translate(225.700 174.2) rotate(-90)" text-anchor="middle" font-family="Liberation Sans, sans-serif" font-size="11" fill="#595959">9</text><rect x="221" y="180.7" width="1.300" height="1" fill="#777"/><rect x="219" y="187.7" width="5" height="1" fill="#777"/><rect x="221" y="194.7" width="1.300" height="1" fill="#777"/><text transform="translate(225.700 202.2) rotate(-90)" text-anchor="middle" font-family="Liberation Sans, sans-serif" font-size="11" fill="#595959">8</text><rect x="221" y="208.7" width="1.300" height="1" fill="#777"/><rect x="219" y="215.7" width="5" height="1" fill="#777"/><rect x="221" y="222.7" width="1.300" height="1" fill="#777"/><text transform="translate(225.700 230.3) rotate(-90)" text-anchor="middle" font-family="Liberation Sans, sans-serif" font-size="11" fill="#595959">7</text><rect x="221" y="236.8" width="1.300" height="1" fill="#777"/><rect x="219" y="243.8" width="5" height="1" fill="#777"/><rect x="221" y="250.8" width="1.300" height="1" fill="#777"/><text transform="translate(225.700 258.3) rotate(-90)" text-anchor="middle" font-family="Liberation Sans, sans-serif" font-size="11" fill="#595959">6</text><rect x="221" y="264.8" width="1.300" height="1" fill="#777"/><rect x="219" y="271.8" width="5" height="1" fill="#777"/><rect x="221" y="278.8" width="1.300" height="1" fill="#777"/><text transform="translate(225.700 286.4) rotate(-90)" text-anchor="middle" font-family="Liberation Sans, sans-serif" font-size="11" fill="#595959">5</text><rect x="221" y="292.9" width="1.300" height="1" fill="#777"/><rect x="219" y="299.9" width="5" height="1" fill="#777"/><rect x="221" y="306.9" width="1.300" height="1" fill="#777"/><text transform="translate(225.700 314.4) rotate(-90)" text-anchor="middle" font-family="Liberation Sans, sans-serif" font-size="11" fill="#595959">4</text><rect x="221" y="320.9" width="1.300" height="1" fill="#777"/><rect x="219" y="327.9" width="5" height="1" fill="#777"/><rect x="221" y="334.9" width="1.300" height="1" fill="#777"/><text transform="translate(225.700 342.5) rotate(-90)" text-anchor="middle" font-family="Liberation Sans, sans-serif" font-size="11" fill="#595959">3</text><rect x="221" y="349.0" width="1.300" height="1" fill="#777"/><rect x="219" y="356.0" width="5" height="1" fill="#777"/><rect x="221" y="363.0" width="1.300" height="1" fill="#777"/><text transform="translate(225.700 370.5) rotate(-90)" text-anchor="middle" font-family="Liberation Sans, sans-serif" font-size="11" fill="#595959">2</text><rect x="221" y="377.0" width="1.300" height="1" fill="#777"/><rect x="219" y="384.0" width="5" height="1" fill="#777"/><rect x="221" y="391.0" width="1.300" height="1" fill="#777"/><text transform="translate(225.700 398.6) rotate(-90)" text-anchor="middle" font-family="Liberation Sans, sans-serif" font-size="11" fill="#595959">1</text><rect x="221" y="405.1" width="1.300" height="1" fill="#777"/><rect x="219" y="412.1" width="5" height="1" fill="#777"/><rect x="221" y="419.1" width="1.300" height="1" fill="#777"/><text transform="translate(225.700 426.6) rotate(-90)" text-anchor="middle" font-family="Liberation Sans, sans-serif" font-size="11" fill="#595959">0</text><rect x="221" y="433.1" width="1.300" height="1" fill="#777"/><rect x="219" y="440.1" width="5" height="1" fill="#777"/><rect x="221" y="447.1" width="1.300" height="1" fill="#777"/><text transform="translate(225.700 454.7) rotate(-90)" text-anchor="middle" font-family="Liberation Sans, sans-serif" font-size="11" fill="#595959">1</text><rect x="221" y="461.2" width="1.300" height="1" fill="#777"/><rect x="219" y="468.2" width="5" height="1" fill="#777"/><rect x="221" y="475.2" width="1.300" height="1" fill="#777"/><text transform="translate(225.700 482.7) rotate(-90)" text-anchor="middle" font-family="Liberation Sans, sans-serif" font-size="11" fill="#595959">2</text><rect x="221" y="489.2" width="1.300" height="1" fill="#777"/><rect x="219" y="496.2" width="5" height="1" fill="#777"/><rect x="221" y="503.2" width="1.300" height="1" fill="#777"/><text transform="translate(225.700 510.8) rotate(-90)" text-anchor="middle" font-family="Liberation Sans, sans-serif" font-size="11" fill="#595959">3</text><rect x="221" y="517.3" width="1.300" height="1" fill="#777"/><rect x="219" y="524.3" width="5" height="1" fill="#777"/><rect x="221" y="531.3" width="1.300" height="1" fill="#777"/><text transform="translate(225.700 538.8) rotate(-90)" text-anchor="middle" font-family="Liberation Sans, sans-serif" font-size="11" fill="#595959">4</text><rect x="221" y="545.3" width="1.300" height="1" fill="#777"/><rect x="219" y="552.3" width="5" height="1" fill="#777"/><rect x="221" y="559.3" width="1.300" height="1" fill="#777"/><text transform="translate(225.700 566.9) rotate(-90)" text-anchor="middle" font-family="Liberation Sans, sans-serif" font-size="11" fill="#595959">5</text><rect x="221" y="573.4" width="1.300" height="1" fill="#777"/><rect x="219" y="580.4" width="5" height="1" fill="#777"/><rect x="221" y="587.4" width="1.300" height="1" fill="#777"/><text transform="translate(225.700 594.9) rotate(-90)" text-anchor="middle" font-family="Liberation Sans, sans-serif" font-size="11" fill="#595959">6</text><rect x="221" y="601.4" width="1.300" height="1" fill="#777"/><rect x="219" y="608.4" width="5" height="1" fill="#777"/><rect x="221" y="615.4" width="1.300" height="1" fill="#777"/><text transform="translate(225.700 623.0) rotate(-90)" text-anchor="middle" font-family="Liberation Sans, sans-serif" font-size="11" fill="#595959">7</text><rect x="221" y="629.5" width="1.300" height="1" fill="#777"/><rect x="219" y="636.5" width="5" height="1" fill="#777"/><rect x="221" y="643.5" width="1.300" height="1" fill="#777"/><text transform="translate(225.700 651.0) rotate(-90)" text-anchor="middle" font-family="Liberation Sans, sans-serif" font-size="11" fill="#595959">8</text><rect x="221" y="657.5" width="1.300" height="1" fill="#777"/><rect x="219" y="664.5" width="5" height="1" fill="#777"/><rect x="221" y="671.5" width="1.300" height="1" fill="#777"/><rect x="221" y="166.6" width="1.300" height="1" fill="#777"/><rect x="1285" y="123" width="12" height="503" fill="#dbdbdb"/><rect x="1285.500" y="125.500" width="14" height="14" fill="#fff" stroke="#ababab"/><path d="M1288.500 135l3.500-4 3.500 4z" fill="#666"/><rect x="1285.500" y="339.500" width="14" height="98" fill="#fff" stroke="#ababab"/></svg>
<span class="t" style="left:11.6px;top:138.0px;height:20px;line-height:20px;font-size:16.6px;color:#4a4a4a;">1</span>
<div class="a" style="left:34px;top:141px;width:151px;height:87px;box-sizing:border-box;border:1px solid #cfcfcf;background:#fff;"></div>
<span class="t" style="left:11.6px;top:243.0px;height:20px;line-height:20px;font-size:16.6px;color:#4a4a4a;">2</span>
<div class="a" style="left:34px;top:246px;width:151px;height:87px;box-sizing:border-box;border:1px solid #cfcfcf;background:#fff;"></div>
<span class="t" style="left:11.6px;top:348.0px;height:20px;line-height:20px;font-size:16.6px;color:#d24726;">3</span>
<div class="a" style="left:32px;top:349px;width:155px;height:91px;box-sizing:border-box;border:3px solid #ec6d4e;background:#fff;"></div>
<span class="t" style="left:11.6px;top:453.0px;height:20px;line-height:20px;font-size:16.6px;color:#4a4a4a;">4</span>
<div class="a" style="left:34px;top:456px;width:151px;height:87px;box-sizing:border-box;border:1px solid #cfcfcf;background:#fff;"></div>
<span class="t" style="left:11.6px;top:558.0px;height:20px;line-height:20px;font-size:16.6px;color:#4a4a4a;">5</span>
<div class="a" style="left:34px;top:561px;width:151px;height:87px;box-sizing:border-box;border:1px solid #cfcfcf;background:#fff;"></div>
<svg style="left:36px;top:353px" width="147" height="82.7" viewBox="311 160.500 947.300 532.900" preserveAspectRatio="none" font-family="Liberation Sans, sans-serif"><rect x="311" y="160.500" width="947.300" height="532.900" fill="#a5b527"/><rect x="329" y="180" width="910" height="495" fill="#fff"/><text x="411" y="270" font-size="40" fill="#a5b527" textLength="246" lengthAdjust="spacingAndGlyphs">Travel Budget</text><path d="M759.99 337.47A144.00 144.00 0 0 1 835.98 337.74L831.57 353.64A127.50 127.50 0 0 0 764.29 353.40Z" fill="#418ab3"/><path d="M836.95 338.01A144.00 144.00 0 1 1 692.53 575.07L704.56 563.78A127.50 127.50 0 1 0 832.43 353.88Z" fill="#a5b527"/><path d="M691.84 574.34A144.00 144.00 0 0 1 685.12 386.47L698.00 396.78A127.50 127.50 0 0 0 703.95 563.13Z" fill="#df5327"/><path d="M685.75 385.68A144.00 144.00 0 0 1 759.02 337.74L763.43 353.64A127.50 127.50 0 0 0 698.55 396.09Z" fill="#fe9e00"/><path d="M861.500 303.500h112v39h-112v-6l-63.500 5.300 63.500-15.800z" fill="#fff" stroke="#a8a8a8" stroke-width="4.500"/><text x="917.5" y="319.7" font-size="11.800" fill="#4a4a4a" text-anchor="middle" textLength="24.8" lengthAdjust="spacingAndGlyphs">Food</text><text x="917.5" y="335.3" font-size="11.800" fill="#4a4a4a" text-anchor="middle" textLength="15.8" lengthAdjust="spacingAndGlyphs">9%</text><path d="M948.500 563.500h18l-54.300-15.700 81.600 15.700h66.700v38h-112z" fill="#fff" stroke="#a8a8a8" stroke-width="4.500"/><text x="1004.5" y="579.2" font-size="11.800" fill="#4a4a4a" text-anchor="middle" textLength="67.9" lengthAdjust="spacingAndGlyphs">Entertainment</text><text x="1004.5" y="594.8" font-size="11.800" fill="#4a4a4a" text-anchor="middle" textLength="21.8" lengthAdjust="spacingAndGlyphs">58%</text><path d="M572.500 323.500h114v13.500l38.200 25.700-38.200-15v7.800h-114z" fill="#fff" stroke="#a8a8a8" stroke-width="4.500"/><text x="629.5" y="336.2" font-size="11.800" fill="#4a4a4a" text-anchor="middle" textLength="78.2" lengthAdjust="spacingAndGlyphs">Accommodation</text><text x="629.5" y="351.8" font-size="11.800" fill="#4a4a4a" text-anchor="middle" textLength="21.8" lengthAdjust="spacingAndGlyphs">10%</text><path d="M521.500 510.500h67l70.500-28-41.500 28h19.500v40h-115z" fill="#fff" stroke="#a8a8a8" stroke-width="4.500"/><text x="579.0" y="527.2" font-size="11.800" fill="#4a4a4a" text-anchor="middle" textLength="29.9" lengthAdjust="spacingAndGlyphs">Travel</text><text x="579.0" y="542.8" font-size="11.800" fill="#4a4a4a" text-anchor="middle" textLength="21.8" lengthAdjust="spacingAndGlyphs">23%</text><rect x="738" y="388" width="138" height="29.500" fill="#000" opacity=".25" filter="url(#bl)"/><rect x="737" y="386" width="138" height="29.700" fill="#fe9e00"/><text x="744.800" y="407" font-size="17.500" fill="#fff" textLength="107" lengthAdjust="spacingAndGlyphs">BON VOYAGE!</text><circle cx="796.500" cy="473.500" r="46.500" fill="#d7d447"/><g fill="#fff" stroke="none"><circle cx="799.500" cy="454.500" r="4.500"/><rect x="783.300" y="459.400" width="9.400" height="17.400" rx="4.200" transform="rotate(7 788 468)"/><circle cx="789.100" cy="457.800" r="3.700"/><circle cx="789.100" cy="458" r="1" fill="#d7d447"/><path d="M795.300 461.800q4.200-1.700 8 0l-.6 5.500-3.200 9.700.8 7.300-9.100-2.300 2.200-9.500z"/></g><g stroke="#fff" fill="none" stroke-linecap="round" stroke-linejoin="round"><path d="M803.300 464.500l2.300 7.800 5.600 1.200" stroke-width="2.900"/><path d="M794.300 482.500l-10.800 13.600" stroke-width="3.700"/><path d="M799.300 482.500l4.300 4v10.500" stroke-width="3.700"/><path d="M809.800 475.800l-17.700 22.200" stroke-width="1.800"/></g></svg>
<svg style="left:36px;top:143px;overflow:hidden" width="147" height="83" viewBox="0 0 147 83" font-family="Liberation Sans, sans-serif"><rect width="147" height="83" fill="#a5b527"/><rect x="3.500" y="3.500" width="140" height="76" fill="none" stroke="#fff" stroke-width="1"/><defs><linearGradient id="sky1" x1="0" y1="0" x2="0" y2="1"><stop offset="0" stop-color="#c3ced4"/><stop offset=".2" stop-color="#dfe3dc"/><stop offset=".31" stop-color="#e6e2cf"/><stop offset=".33" stop-color="#7f9460"/><stop offset=".45" stop-color="#5d7a2a"/><stop offset=".75" stop-color="#6c8a2d"/><stop offset="1" stop-color="#587426"/></linearGradient><linearGradient id="sky1b" x1="0" y1="0" x2="1" y2="0"><stop offset=".3" stop-color="#9db8cd" stop-opacity="0"/><stop offset="1" stop-color="#9db8cd" stop-opacity=".9"/></linearGradient><clipPath id="c1"><rect x="3" y="3" width="141" height="45.600"/></clipPath></defs><g clip-path="url(#c1)"><rect x="3" y="3" width="141" height="46" fill="url(#sky1)"/><rect x="3" y="3" width="141" height="13" fill="url(#sky1b)"/><g filter="url(#b2)"><ellipse cx="120" cy="38" rx="26" ry="13" fill="#3c4f1e"/><ellipse cx="100" cy="22" rx="44" ry="3" fill="#4a6428"/><ellipse cx="68" cy="42" rx="16" ry="7" fill="#7c9c34"/><ellipse cx="33" cy="25" rx="9" ry="6" fill="#90ac40"/><ellipse cx="75" cy="27" rx="8" ry="4" fill="#3f5522"/><ellipse cx="110" cy="8" rx="26" ry="2" fill="#e4e8e8"/></g><g filter="url(#b0)"><path d="M3 3h16.500c1.500 9 6 19 13.700 29.200l25.800 16.400H3z" fill="#4a2a14"/><path d="M8 8l7 2 4 12-8 8-6-10zM10 36l10-4 8 8-6 8h-12z" fill="#633719" opacity=".8"/><path d="M46 34l2-8 4-4 3.400-9.800 2.800 7 3.700-8.200 3.500 9.500 4 6 .6 5-4 2.500z" fill="#96572a"/><path d="M46 30h22v4h-22z" fill="#a86a30"/><path d="M78.300 48.600l2.500-13 2.200-8 1.500-3.100 1.500 3.100 1.700 8 2.300 13z" fill="#9c5f2b"/><path d="M117 24.500l1.200-4 1.200 4z" fill="#9a5a30"/><circle cx="44.600" cy="8.100" r="2.400" fill="#1c1a14"/><path d="M41 11.500c2-1.200 5-1 6.500.5l1 9.500-2.500 1.500h-4.500l-1.500-6z" fill="#22231c"/><path d="M42.500 22.500h5l-.5 6.500h-4z" fill="#6a5a2a"/><path d="M43.500 29h2.600l-.3 9h-2z" fill="#b08a64"/><path d="M43 38h4.500l1 1.500h-5.500z" fill="#8a6a50"/></g></g><text x="24" y="64" font-size="10.200" font-weight="bold" fill="#fff" textLength="99" lengthAdjust="spacingAndGlyphs">Safest Solutions Group</text><rect x="24" y="65.600" width="99" height="1" fill="#fff"/><text x="73.500" y="70" font-size="2.400" fill="#fff" text-anchor="middle">Travel easily</text><rect x="67" y="70.300" width="13" height=".4" fill="#fff"/><text x="73.500" y="72.600" font-size="2.600" font-weight="bold" fill="#fff" text-anchor="middle" textLength="58">It is better to enjoy your adventure at Adventure</text></svg>
<svg style="left:36px;top:248px;overflow:hidden" width="147" height="83" viewBox="0 0 147 83" font-family="Liberation Sans, sans-serif"><rect width="147" height="83" fill="#a5b527"/><rect x="3" y="3" width="141" height="77" fill="#fff"/><defs><linearGradient id="sky2" x1="0" y1="0" x2=".3" y2="1"><stop offset="0" stop-color="#5f8f92"/><stop offset=".4" stop-color="#8fb0a4"/><stop offset=".75" stop-color="#c5cfae"/><stop offset="1" stop-color="#d9d9b4"/></linearGradient><clipPath id="c2"><rect x="100" y="3" width="44" height="77"/></clipPath></defs><g clip-path="url(#c2)"><rect x="100" y="3" width="44" height="77" fill="url(#sky2)"/><g filter="url(#b0)"><path d="M100 80v-5l6-3 4-6 6-4 8-2.500 8 .5 12-2v22z" fill="#3a2a16"/><path d="M117 67l7-4 8 1 12-3v10l-18 5z" fill="#8a6a34"/><path d="M112 70l6-5 6 4-5 6z" fill="#5a4524"/><path d="M125.300 46.500c1-.8 2.200 0 2 1.200l.3 3 1.200 3.500-1 5.500h-2l-.3-5.500-1.200-3z" fill="#2a2e2c"/></g></g><text x="15" y="16.900" font-size="6.400" fill="#a5b527" textLength="61" lengthAdjust="spacingAndGlyphs">Choose an Experience</text><circle cx="26" cy="43" r="7" fill="#d7d447"/><path d="M26.0 40.500l1.500 1.500-1 2 1.500 2.500M26.5 42l-2.500 1M26.5 44l-2 3" stroke="#fff" stroke-width=".9" fill="none"/><circle cx="26.5" cy="39.300" r="1" fill="#fff"/><circle cx="54" cy="43" r="7" fill="#55a981"/><path d="M54.0 40.500l1.500 1.500-1 2 1.500 2.500M54.5 42l-2.500 1M54.5 44l-2 3" stroke="#fff" stroke-width=".9" fill="none"/><circle cx="54.5" cy="39.300" r="1" fill="#fff"/><circle cx="82" cy="43" r="7" fill="#818183"/><path d="M82.0 40.500l1.500 1.500-1 2 1.500 2.500M82.5 42l-2.500 1M82.5 44l-2 3" stroke="#fff" stroke-width=".9" fill="none"/><circle cx="82.5" cy="39.300" r="1" fill="#fff"/><text x="15.400" y="60" font-size="4" fill="#555" textLength="21.400" lengthAdjust="spacingAndGlyphs">Adventure</text><text x="41.800" y="60" font-size="4" fill="#555" textLength="24.200" lengthAdjust="spacingAndGlyphs">Enthusiasm</text><text x="71.600" y="60" font-size="4" fill="#555" textLength="20" lengthAdjust="spacingAndGlyphs">Discovery</text></svg>
<svg style="left:36px;top:458px;overflow:hidden" width="147" height="83" viewBox="0 0 147 83" font-family="Liberation Sans, sans-serif"><rect width="147" height="83" fill="#a5b527"/><rect x="3" y="3" width="141" height="77" fill="#fff"/><defs><clipPath id="c4"><rect x="3" y="3" width="51" height="77"/></clipPath><pattern id="hat" width="3" height="3" patternUnits="userSpaceOnUse" patternTransform="rotate(45)"><rect width="1" height="3" fill="#e07a6a"/></pattern></defs><g clip-path="url(#c4)"><rect x="3" y="3" width="51" height="77" fill="#a9a8a3"/><path d="M3 30h51M3 53h51M18 3v77M40 3v77" stroke="#b6b5b0" stroke-width=".6"/><rect x="6" y="4" width="24.500" height="12.700" fill="url(#hat)" opacity=".85"/><rect x="6" y="58.400" width="24.500" height="11.500" fill="url(#hat)" opacity=".85"/><g filter="url(#b0)"><path d="M3 11.500l15.500-8h3l-18.500 11z" fill="#f2f2f2"/><path d="M18 3h4l-2.500 2z" fill="#222"/><path d="M33.500 3h2.500l2 6.500h-2z" fill="#f0f0f0"/><path d="M3 63.300l21-1.300 1 3-22 2z" fill="#e6e6e6"/><path d="M3 66.500l20-1.500v1.200l-20 2z" fill="#555"/><path d="M19.600 55.600c2-1.300 8-1.800 16-1.800h18v3.300h-18c-8 0-14-.3-16-1.500z" fill="#f8f8f8"/><path d="M34.500 54l5.200-14.500 1.800.3-2.500 14.200zM34.500 57l6 13.700 1.800-.5-3.300-13.200z" fill="#f4f4f4"/><path d="M35.500 58.500l4.500 10 1-.3z" fill="#555" opacity=".6"/><rect x="31" y="49.800" width="3.500" height="2.200" rx="1" fill="#e8e8e8"/><rect x="31.500" y="59" width="3.500" height="2.200" rx="1" fill="#e8e8e8"/><path d="M51 54l2.500-4h.5v11h-.5l-2.500-4z" fill="#d4d4e2"/><path d="M49 57.500l5 1v2l-5-1.500z" fill="#444" opacity=".6"/><rect x="23.200" y="19.600" width="8.600" height="3.600" rx="1" fill="#f4f4f4"/><rect x="22.500" y="21" width="2" height="2.200" fill="#444"/><rect x="34.700" y="28" width="3.600" height="2" rx="1" fill="#f0f0f0"/><rect x="12" y="21" width="2.600" height="1.800" rx=".8" fill="#dfe5ea"/><rect x="15.500" y="21" width="2.600" height="1.800" rx=".8" fill="#dfe5ea"/><rect x="4" y="17.500" width="2" height="2" fill="#e8e8e8"/><rect x="19.600" y="35.600" width="2.200" height="1.700" fill="#56606c"/><rect x="22.600" y="35.600" width="2.200" height="1.700" fill="#56606c"/><rect x="25.500" y="35.600" width="2.200" height="1.700" fill="#56606c"/><rect x="5.200" y="37.400" width="4.300" height="2.300" rx=".8" fill="#e3ad2a"/><rect x="3.800" y="40.600" width="2.600" height="2.400" fill="#dba52a"/><rect x="6.800" y="42" width="2.200" height="2.600" fill="#dba52a"/><rect x="7" y="46.500" width="2" height="2.400" fill="#d39c25"/><rect x="3.200" y="44" width="2" height="2" fill="#c99a30"/><rect x="22.500" y="72.800" width="6.400" height="3.600" rx="1" fill="#f0f0f0"/><rect x="3" y="75" width="6.500" height="3.600" rx="1" fill="#ededed"/><rect x="3" y="52" width="2" height="2.500" fill="#e4e4e4"/></g></g><text x="59" y="17.300" font-size="6.600" fill="#a5b527" textLength="41" lengthAdjust="spacingAndGlyphs">Transportation</text><g transform="translate(0 1.600)"><circle cx="67.5" cy="32" r="5.3" fill="#f8d5cc"/><circle cx="78" cy="38" r="5.3" fill="#f8d5cc"/><circle cx="67.5" cy="44.5" r="5.3" fill="#f8d5cc"/><circle cx="61" cy="38" r="2.8" fill="#e8957f"/><circle cx="75" cy="31" r="1.7" fill="#e8957f"/><circle cx="75" cy="45.5" r="1.7" fill="#e8957f"/><circle cx="98" cy="39" r="10" fill="#c6d37e"/><circle cx="108" cy="39" r="10" fill="#c6d37e"/><path d="M103 30.300a10 10 0 0 1 0 17.400a10 10 0 0 1 0-17.400z" fill="#a5b845"/><circle cx="131" cy="38" r="10" fill="#d5e6ee"/><path d="M80 28c6 7 6 15 0 22M122 28c-6 7-6 15 0 22" stroke="#d8d8d8" stroke-width="1.600" fill="none"/><path d="M90 28c-6 7-6 15 0 22M113 28c6 7 6 15 0 22" stroke="#d8d8d8" stroke-width="1.600" fill="none"/><text x="67.5" y="32.5" font-size="2.300" fill="#333" text-anchor="middle">Public</text><text x="78" y="38.8" font-size="2.300" fill="#333" text-anchor="middle">Taxi</text><text x="67.5" y="45.2" font-size="2.300" fill="#333" text-anchor="middle">Rental</text><text x="96" y="39.8" font-size="2.300" fill="#333" text-anchor="middle">Jet</text><text x="109" y="39.8" font-size="2.300" fill="#333" text-anchor="middle">Economy</text><text x="131" y="38.8" font-size="2.300" fill="#333" text-anchor="middle">Railway</text><text x="70" y="53.5" font-size="2.300" fill="#333" text-anchor="middle">Car</text><text x="103" y="53.5" font-size="2.300" fill="#333" text-anchor="middle">Air</text><text x="131" y="53.5" font-size="2.300" fill="#333" text-anchor="middle">Rail</text></g></svg>
<svg style="left:36px;top:563px;overflow:hidden" width="147" height="83" viewBox="0 0 147 83" font-family="Liberation Sans, sans-serif"><rect width="147" height="83" fill="#a5b527"/><rect x="3.500" y="3.500" width="140" height="76" fill="none" stroke="#fff" stroke-width="1"/><defs><clipPath id="c5"><rect x="4" y="4" width="64" height="75"/></clipPath></defs><g clip-path="url(#c5)"><rect x="4" y="4" width="64" height="75" fill="#e9edf1"/><g filter="url(#b2)"><ellipse cx="19" cy="5.500" rx="9" ry="2.500" fill="#6f95c8"/><ellipse cx="8" cy="24" rx="5" ry="2" fill="#86a5cf"/><ellipse cx="31" cy="22" rx="3" ry="4.500" fill="#9db6d8"/><ellipse cx="53" cy="20.500" rx="5" ry="1.800" fill="#b4c8e0"/><ellipse cx="60" cy="5" rx="4" ry="1.500" fill="#a9c0dc"/><ellipse cx="45" cy="10" rx="14" ry="6" fill="#fafafa"/><ellipse cx="20" cy="14" rx="12" ry="5" fill="#f6f7f8"/><ellipse cx="55" cy="38" rx="10" ry="6" fill="#dfe4ea"/></g><g filter="url(#b0)"><path d="M4 38l4.500 3 3.200 10.500 7.300 5.500 5.500 2 8.500-4 9.500 5 25.500-2v21H4z" fill="#756c61"/><path d="M4 49l8 8 8 7 10 4 12 2 8 9H4z" fill="#c8c1b8"/><path d="M4 60l10 8 6 11H4z" fill="#8b8379"/><path d="M30 60l10-2 8 4 20 1v16H30z" fill="#6a6259" opacity=".8"/><path d="M11.700 35l5-5.500 5.500 2-3 8.500-5.500 2z" fill="#4d6b35"/><circle cx="18" cy="28.800" r="2.300" fill="#f3f3f3"/><path d="M15 36l6-3.500 6 .5 2.600 6-3 7.500-5 .5-6.500-3z" fill="#dfa526"/><path d="M27 38.500l8.500 10-1.300 1.300-9.700-7z" fill="#dfa526"/><circle cx="27.700" cy="32.300" r="2.900" fill="#35302c"/><path d="M12 44l9 3 6 2 1.600 8-2.600.6-3.300-6.600-6 .5-3.200 7.500-3.200-1z" fill="#202126"/><path d="M35 49.500l5 2.500 5-4.500 7.500 1.500 2.500 8.500-9 2-4-5.500-7-3z" fill="#a92b45"/><circle cx="44.400" cy="45.600" r="2.900" fill="#7c2036"/><path d="M50 46.500l5 .5 3 5-1 4.500-4-.5z" fill="#24415f"/><path d="M45.500 56.500l10-.5 1.500 5.300-11 .5z" fill="#2f4f78"/></g></g><text x="74.700" y="17.300" font-size="6.600" fill="#fff" textLength="28.500" lengthAdjust="spacingAndGlyphs">Thank You</text><text x="74.700" y="29.300" font-size="2.700" fill="#fff" textLength="31" lengthAdjust="spacingAndGlyphs">Katie@safestsolutions.com</text></svg>
<div class="a" id="popup" style="left:267px;top:36px;width:412px;height:552px;box-sizing:border-box;background:#fff;border:1px solid #c2c2c2;box-shadow:0 1px 5px rgba(0,0,0,.32);"></div>
<div class="a" style="left:269px;top:62px;width:392px;height:22px;background:#ebebeb;"></div>
<div class="a" style="left:269px;top:420px;width:392px;height:22px;background:#ebebeb;"></div>
<span class="t" style="left:278.3px;top:64.6px;height:16px;line-height:16px;font-size:12px;color:#5c6570;letter-spacing:-0.197px;font-weight:bold;">Theme Styles</span>
<span class="t" style="left:278.3px;top:423.0px;height:16px;line-height:16px;font-size:12px;color:#5c6570;letter-spacing:-0.381px;font-weight:bold;">Presets</span>
<div class="a" style="left:268px;top:554px;width:410px;height:1px;background:#dcdcdc;"></div>
<span class="t" style="left:301.2px;top:559.8px;height:16px;line-height:16px;font-size:12px;color:#444;letter-spacing:-0.149px;"><span style="text-decoration:underline">O</span>ther Theme Fills</span>
<svg style="left:0;top:0" width="1297" height="626" viewBox="0 0 1297 626"><path d="M653.500 46.500h8l-4 4.300z" fill="#555"/><rect x="662" y="64" width="15" height="487" fill="#f1f1f1"/><rect x="662.500" y="64.500" width="14" height="14" fill="#fff" stroke="#ababab"/><path d="M666 73.500l3.500-4 3.500 4z" fill="#555"/><rect x="662.500" y="78.500" width="14" height="341" fill="#fff" stroke="#ababab"/><rect x="662.500" y="537.500" width="14" height="13" fill="#fff" stroke="#ababab"/><path d="M666 542.500h7l-3.500 4z" fill="#555"/><path d="M665.500 563v8l4-4z" fill="#555"/><rect x="464.5" y="582" width="2" height="2" fill="#8796ad"/><rect x="469.0" y="582" width="2" height="2" fill="#8796ad"/><rect x="473.5" y="582" width="2" height="2" fill="#8796ad"/><rect x="478.0" y="582" width="2" height="2" fill="#8796ad"/></svg>
<div class="a" style="left:437px;top:308px;width:56px;height:56px;box-sizing:border-box;border:1px solid #a3a3a3;background:#fff;"><div style="position:absolute;left:0;top:0;right:0;bottom:0;border:2px solid #c9c9c9;"></div></div>
<div class="a it" style="left:277.5px;top:92.0px;width:39.0px;height:39.0px;background:#fff;border:2px solid #000000;border-radius:8px;color:#1a1a1a;"><span>Abc</span></div>
<div class="a it" style="left:277.5px;top:148.0px;width:39.0px;height:39.0px;background:#000000;border:2px solid #000000;border-radius:8px;color:#fff;"><span>Abc</span></div>
<div class="a it" style="left:279.0px;top:206.0px;width:36.0px;height:36.0px;background:#000000;border:1px solid #fff;border-radius:6px;box-shadow:0 0 0 1px #222;color:#fff;"><span>Abc</span></div>
<div class="a it" style="left:278.0px;top:261.0px;width:38.0px;height:38.0px;background:#b3b3b3;border:1px solid #000000;border-radius:8px;color:#1a1a1a;"><span>Abc</span></div>
<div class="a it" style="left:278.3px;top:315.3px;width:37.7px;height:37.7px;background:#000000;border-radius:7px;box-shadow:0 1.500px 2.500px rgba(0,0,0,.38);color:#fff;"><span>Abc</span></div>
<div class="a it" style="left:276.5px;top:371.0px;width:40.5px;height:40.5px;background:#000;border-radius:8px;box-shadow:0 1px 2px rgba(0,0,0,.4);color:#fff;"><span>Abc</span></div>
<div class="a it" style="left:278.3px;top:451.3px;width:37.7px;height:37.7px;background:conic-gradient(#c3c3c3 25%,#f3f3f3 0 50%,#c3c3c3 0 75%,#f3f3f3 0) 0 0/6px 6px;border-radius:7px;color:#1a1a1a;"><span>Abc</span></div>
<div class="a it" style="left:277.5px;top:506.5px;width:39.0px;height:39.0px;background:conic-gradient(#c3c3c3 25%,#f3f3f3 0 50%,#c3c3c3 0 75%,#f3f3f3 0) 0 0/6px 6px;border:2px solid #000000;border-radius:8px;color:#1a1a1a;"><span>Abc</span></div>
<div class="a it" style="left:333.5px;top:92.0px;width:39.0px;height:39.0px;background:#fff;border:2px solid #a6b727;border-radius:8px;color:#1a1a1a;"><span>Abc</span></div>
<div class="a it" style="left:333.5px;top:148.0px;width:39.0px;height:39.0px;background:#a6b727;border:2px solid #7d8a1d;border-radius:8px;color:#fff;"><span>Abc</span></div>
<div class="a it" style="left:335.0px;top:206.0px;width:36.0px;height:36.0px;background:#a6b727;border:1px solid #fff;border-radius:6px;box-shadow:0 0 0 1px #c5d073;color:#fff;"><span>Abc</span></div>
<div class="a it" style="left:334.0px;top:261.0px;width:38.0px;height:38.0px;background:#dce4b4;border:1px solid #a6b727;border-radius:8px;color:#1a1a1a;"><span>Abc</span></div>
<div class="a it" style="left:334.3px;top:315.3px;width:37.7px;height:37.7px;background:#a6b727;border-radius:7px;box-shadow:0 1.500px 2.500px rgba(0,0,0,.38);color:#fff;"><span>Abc</span></div>
<div class="a it" style="left:333.5px;top:372.0px;width:38.0px;height:38.0px;background:#a6b727;border:5px solid #8a9820;border-radius:7px;box-shadow:0 0 0 1.500px #6a7519,0 2px 2px 1px rgba(0,0,0,.3);color:#fff;"><span>Abc</span></div>
<div class="a it" style="left:334.3px;top:451.3px;width:37.7px;height:37.7px;background:conic-gradient(#c3c3c3 25%,#f3f3f3 0 50%,#c3c3c3 0 75%,#f3f3f3 0) 0 0/6px 6px;border-radius:7px;color:#afbc4c;"><span>Abc</span></div>
<div class="a it" style="left:333.5px;top:506.5px;width:39.0px;height:39.0px;background:conic-gradient(#c3c3c3 25%,#f3f3f3 0 50%,#c3c3c3 0 75%,#f3f3f3 0) 0 0/6px 6px;border:2px solid #a6b727;border-radius:8px;color:#afbc4c;"><span>Abc</span></div>
<div class="a it" style="left:389.5px;top:92.0px;width:39.0px;height:39.0px;background:#fff;border:2px solid #df5327;border-radius:8px;color:#1a1a1a;"><span>Abc</span></div>
<div class="a it" style="left:389.5px;top:148.0px;width:39.0px;height:39.0px;background:#df5327;border:2px solid #a63d1c;border-radius:8px;color:#fff;"><span>Abc</span></div>
<div class="a it" style="left:391.0px;top:206.0px;width:36.0px;height:36.0px;background:#df5327;border:1px solid #fff;border-radius:6px;box-shadow:0 0 0 1px #ea8f73;color:#fff;"><span>Abc</span></div>
<div class="a it" style="left:390.0px;top:261.0px;width:38.0px;height:38.0px;background:#f6b4a9;border:1px solid #df5327;border-radius:8px;color:#1a1a1a;"><span>Abc</span></div>
<div class="a it" style="left:390.3px;top:315.3px;width:37.7px;height:37.7px;background:#df5327;border-radius:7px;box-shadow:0 1.500px 2.500px rgba(0,0,0,.38);color:#fff;"><span>Abc</span></div>
<div class="a it" style="left:389.5px;top:372.0px;width:38.0px;height:38.0px;background:#df5327;border:5px solid #b94520;border-radius:7px;box-shadow:0 0 0 1.500px #8f3519,0 2px 2px 1px rgba(0,0,0,.3);color:#fff;"><span>Abc</span></div>
<div class="a it" style="left:390.3px;top:451.3px;width:37.7px;height:37.7px;background:conic-gradient(#c3c3c3 25%,#f3f3f3 0 50%,#c3c3c3 0 75%,#f3f3f3 0) 0 0/6px 6px;border-radius:7px;color:#dc6e4c;"><span>Abc</span></div>
<div class="a it" style="left:389.5px;top:506.5px;width:39.0px;height:39.0px;background:conic-gradient(#c3c3c3 25%,#f3f3f3 0 50%,#c3c3c3 0 75%,#f3f3f3 0) 0 0/6px 6px;border:2px solid #df5327;border-radius:8px;color:#dc6e4c;"><span>Abc</span></div>
<div class="a it" style="left:445.5px;top:92.0px;width:39.0px;height:39.0px;background:#fff;border:2px solid #fe9e00;border-radius:8px;color:#1a1a1a;"><span>Abc</span></div>
<div class="a it" style="left:445.5px;top:148.0px;width:39.0px;height:39.0px;background:#fe9e00;border:2px solid #bf7700;border-radius:8px;color:#fff;"><span>Abc</span></div>
<div class="a it" style="left:447.0px;top:206.0px;width:36.0px;height:36.0px;background:#fe9e00;border:1px solid #fff;border-radius:6px;box-shadow:0 0 0 1px #fec059;color:#fff;"><span>Abc</span></div>
<div class="a it" style="left:446.0px;top:261.0px;width:38.0px;height:38.0px;background:#fed0a5;border:1px solid #fe9e00;border-radius:8px;color:#1a1a1a;"><span>Abc</span></div>
<div class="a it" style="left:446.3px;top:315.3px;width:37.7px;height:37.7px;background:#fe9e00;border-radius:7px;box-shadow:0 1.500px 2.500px rgba(0,0,0,.38);color:#fff;"><span>Abc</span></div>
<div class="a it" style="left:445.5px;top:372.0px;width:38.0px;height:38.0px;background:#fe9e00;border:5px solid #d38300;border-radius:7px;box-shadow:0 0 0 1.500px #a36500,0 2px 2px 1px rgba(0,0,0,.3);color:#fff;"><span>Abc</span></div>
<div class="a it" style="left:446.3px;top:451.3px;width:37.7px;height:37.7px;background:conic-gradient(#c3c3c3 25%,#f3f3f3 0 50%,#c3c3c3 0 75%,#f3f3f3 0) 0 0/6px 6px;border-radius:7px;color:#f4a92e;"><span>Abc</span></div>
<div class="a it" style="left:445.5px;top:506.5px;width:39.0px;height:39.0px;background:conic-gradient(#c3c3c3 25%,#f3f3f3 0 50%,#c3c3c3 0 75%,#f3f3f3 0) 0 0/6px 6px;border:2px solid #fe9e00;border-radius:8px;color:#f4a92e;"><span>Abc</span></div>
<div class="a it" style="left:501.5px;top:92.0px;width:39.0px;height:39.0px;background:#fff;border:2px solid #418ab3;border-radius:8px;color:#1a1a1a;"><span>Abc</span></div>
<div class="a it" style="left:501.5px;top:148.0px;width:39.0px;height:39.0px;background:#418ab3;border:2px solid #31688a;border-radius:8px;color:#fff;"><span>Abc</span></div>
<div class="a it" style="left:503.0px;top:206.0px;width:36.0px;height:36.0px;background:#418ab3;border:1px solid #fff;border-radius:6px;box-shadow:0 0 0 1px #84b3ce;color:#fff;"><span>Abc</span></div>
<div class="a it" style="left:502.0px;top:261.0px;width:38.0px;height:38.0px;background:#b4cbe1;border:1px solid #418ab3;border-radius:8px;color:#1a1a1a;"><span>Abc</span></div>
<div class="a it" style="left:502.3px;top:315.3px;width:37.7px;height:37.7px;background:#418ab3;border-radius:7px;box-shadow:0 1.500px 2.500px rgba(0,0,0,.38);color:#fff;"><span>Abc</span></div>
<div class="a it" style="left:501.5px;top:372.0px;width:38.0px;height:38.0px;background:#418ab3;border:5px solid #367395;border-radius:7px;box-shadow:0 0 0 1.500px #2a5873,0 2px 2px 1px rgba(0,0,0,.3);color:#fff;"><span>Abc</span></div>
<div class="a it" style="left:502.3px;top:451.3px;width:37.7px;height:37.7px;background:conic-gradient(#c3c3c3 25%,#f3f3f3 0 50%,#c3c3c3 0 75%,#f3f3f3 0) 0 0/6px 6px;border-radius:7px;color:#6099b9;"><span>Abc</span></div>
<div class="a it" style="left:501.5px;top:506.5px;width:39.0px;height:39.0px;background:conic-gradient(#c3c3c3 25%,#f3f3f3 0 50%,#c3c3c3 0 75%,#f3f3f3 0) 0 0/6px 6px;border:2px solid #418ab3;border-radius:8px;color:#6099b9;"><span>Abc</span></div>
<div class="a it" style="left:557.5px;top:92.0px;width:39.0px;height:39.0px;background:#fff;border:2px solid #d7d447;border-radius:8px;color:#1a1a1a;"><span>Abc</span></div>
<div class="a it" style="left:557.5px;top:148.0px;width:39.0px;height:39.0px;background:#d7d447;border:2px solid #a9a62f;border-radius:8px;color:#fff;"><span>Abc</span></div>
<div class="a it" style="left:559.0px;top:206.0px;width:36.0px;height:36.0px;background:#d7d447;border:1px solid #fff;border-radius:6px;box-shadow:0 0 0 1px #e5e387;color:#fff;"><span>Abc</span></div>
<div class="a it" style="left:558.0px;top:261.0px;width:38.0px;height:38.0px;background:#f0efb4;border:1px solid #d7d447;border-radius:8px;color:#1a1a1a;"><span>Abc</span></div>
<div class="a it" style="left:558.3px;top:315.3px;width:37.7px;height:37.7px;background:#d7d447;border-radius:7px;box-shadow:0 1.500px 2.500px rgba(0,0,0,.38);color:#fff;"><span>Abc</span></div>
<div class="a it" style="left:557.5px;top:372.0px;width:38.0px;height:38.0px;background:#d7d447;border:5px solid #b2b03b;border-radius:7px;box-shadow:0 0 0 1.500px #8a882d,0 2px 2px 1px rgba(0,0,0,.3);color:#fff;"><span>Abc</span></div>
<div class="a it" style="left:558.3px;top:451.3px;width:37.7px;height:37.7px;background:conic-gradient(#c3c3c3 25%,#f3f3f3 0 50%,#c3c3c3 0 75%,#f3f3f3 0) 0 0/6px 6px;border-radius:7px;color:#d5d365;"><span>Abc</span></div>
<div class="a it" style="left:557.5px;top:506.5px;width:39.0px;height:39.0px;background:conic-gradient(#c3c3c3 25%,#f3f3f3 0 50%,#c3c3c3 0 75%,#f3f3f3 0) 0 0/6px 6px;border:2px solid #d7d447;border-radius:8px;color:#d5d365;"><span>Abc</span></div>
<div class="a it" style="left:613.5px;top:92.0px;width:39.0px;height:39.0px;background:#fff;border:2px solid #818183;border-radius:8px;color:#1a1a1a;"><span>Abc</span></div>
<div class="a it" style="left:613.5px;top:148.0px;width:39.0px;height:39.0px;background:#818183;border:2px solid #5f5f61;border-radius:8px;color:#fff;"><span>Abc</span></div>
<div class="a it" style="left:615.0px;top:206.0px;width:36.0px;height:36.0px;background:#818183;border:1px solid #fff;border-radius:6px;box-shadow:0 0 0 1px #adadae;color:#fff;"><span>Abc</span></div>
<div class="a it" style="left:614.0px;top:261.0px;width:38.0px;height:38.0px;background:#c1c1c1;border:1px solid #818183;border-radius:8px;color:#1a1a1a;"><span>Abc</span></div>
<div class="a it" style="left:614.3px;top:315.3px;width:37.7px;height:37.7px;background:#818183;border-radius:7px;box-shadow:0 1.500px 2.500px rgba(0,0,0,.38);color:#fff;"><span>Abc</span></div>
<div class="a it" style="left:613.5px;top:372.0px;width:38.0px;height:38.0px;background:#818183;border:5px solid #6b6b6d;border-radius:7px;box-shadow:0 0 0 1.500px #535354,0 2px 2px 1px rgba(0,0,0,.3);color:#fff;"><span>Abc</span></div>
<div class="a it" style="left:614.3px;top:451.3px;width:37.7px;height:37.7px;background:conic-gradient(#c3c3c3 25%,#f3f3f3 0 50%,#c3c3c3 0 75%,#f3f3f3 0) 0 0/6px 6px;border-radius:7px;color:#929294;"><span>Abc</span></div>
<div class="a it" style="left:613.5px;top:506.5px;width:39.0px;height:39.0px;background:conic-gradient(#c3c3c3 25%,#f3f3f3 0 50%,#c3c3c3 0 75%,#f3f3f3 0) 0 0/6px 6px;border:2px solid #818183;border-radius:8px;color:#929294;"><span>Abc</span></div>
<div class="a" style="left:473px;top:358.500px;width:195px;height:23.500px;box-sizing:border-box;background:#fff;border:1px solid #bebebe;box-shadow:1px 1px 3px rgba(0,0,0,.25);"></div>
<span class="t" style="left:478.6px;top:363.0px;height:16px;line-height:16px;font-size:12px;color:#575757;letter-spacing:-0.070px;">Moderate Effect - Orange, Accent 3</span>
<svg style="left:474px;top:337px" width="16" height="22" viewBox="0 0 16 22"><path d="M1.500 1.200v15.300l3.600-3.300 2.600 6 2.500-1.100-2.600-5.800h5.100z" fill="#fff" stroke="#000" stroke-width="1.100" stroke-linejoin="round"/></svg>
</div>
</body></html>
